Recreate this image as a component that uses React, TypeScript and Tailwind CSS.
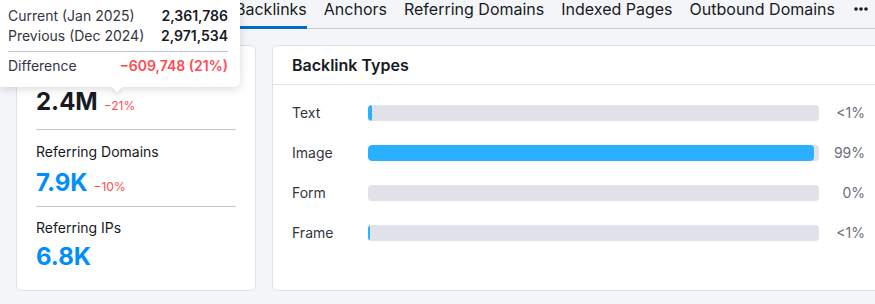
import React from "react";

const tabs = ["Backlinks", "Anchors", "Referring Domains", "Indexed Pages", "Outbound Domains"];

const types = [
  { label: "Text", fill: 4, pct: "<1%" },
  { label: "Image", fill: 446, pct: "99%" },
  { label: "Form", fill: 0, pct: "0%" },
  { label: "Frame", fill: 2, pct: "<1%" },
];

function Tooltip() {
  return (
    <div className="absolute left-0 top-0 z-10 w-[240px] h-[87px] bg-white rounded-br-md shadow-[0_2px_10px_rgba(0,0,0,0.15)] px-2 pt-[6px] text-sm leading-5">
      <div className="flex justify-between">
        <span className="text-[#333642]">Current (Jan 2025)</span>
        <span className="font-semibold text-[#171a22] pr-1">2,361,786</span>
      </div>
      <div className="flex justify-between">
        <span className="text-[#333642]">Previous (Dec 2024)</span>
        <span className="font-semibold text-[#171a22] pr-1">2,971,534</span>
      </div>
      <div className="mt-[5px] mr-1 h-px bg-[#c4c7cf]" />
      <div className="mt-1 flex justify-between">
        <span className="text-[#333642]">Difference</span>
        <span className="font-semibold text-[#ff4953] pr-1">−609,748 (21%)</span>
      </div>
      <div className="absolute left-[113px] bottom-[-4px] w-2 h-2 rotate-45 bg-white shadow-[2px_2px_3px_rgba(0,0,0,0.08)]" />
    </div>
  );
}

export default function App() {
  return (
    <div
      className="relative w-[875px] h-[304px] overflow-hidden bg-[#f4f5f9] text-[#171a22]"
      style={{ fontFamily: "Inter, 'Noto Sans', sans-serif" }}
    >
      <Tooltip />

      <div className="flex items-start h-[29px] border-b border-[#c8cad3] pl-[235px] gap-[17px] text-base leading-[18px] whitespace-nowrap">
        {tabs.map((t, i) => (
          <div
            key={t}
            className={i === 0 ? "h-[29px] -mb-px border-b-[3px] border-[#006dca]" : "h-[28px]"}
          >
            {t}
          </div>
        ))}
        <svg width="16" height="18" viewBox="0 0 16 18" className="ml-[2px]">
          <circle cx="2" cy="9" r="1.8" fill="#171a22" />
          <circle cx="7" cy="9" r="1.8" fill="#171a22" />
          <circle cx="12" cy="9" r="1.8" fill="#171a22" />
        </svg>
      </div>

      <div className="flex gap-4 pl-4 pt-4">
        {/* summary card */}
        <div className="w-[240px] h-[246px] shrink-0 bg-white rounded-md border border-[#e0e1e9] px-[19px] pt-[15px]">
          <div className="text-sm leading-5">Backlinks</div>
          <div className="mt-[5px] flex items-baseline gap-[6px] h-8">
            <span className="text-2xl font-bold leading-8">2.4M</span>
            <span className="text-xs text-[#ff4953]">−21%</span>
          </div>
          <div className="mt-[11px] h-px bg-[#c4c7cf]" />
          <div className="mt-3 text-sm leading-5">Referring Domains</div>
          <div className="mt-[5px] flex items-baseline gap-[6px] h-8">
            <span className="text-2xl font-bold leading-8 text-[#008ff8]">7.9K</span>
            <span className="text-xs text-[#ff4953]">−10%</span>
          </div>
          <div className="mt-[7px] h-px bg-[#c4c7cf]" />
          <div className="mt-[11px] text-sm leading-5">Referring IPs</div>
          <div className="mt-[3px] flex items-baseline h-8">
            <span className="text-2xl font-bold leading-8 text-[#008ff8]">6.8K</span>
          </div>
        </div>

        {/* backlink types card */}
        <div className="w-[620px] h-[246px] shrink-0 bg-white rounded-md border border-[#e0e1e9]">
          <div className="h-[39px] border-b border-[#e0e1e9] px-[19px] flex items-center">
            <span className="text-base font-semibold">Backlink Types</span>
          </div>
          <div className="pt-2 pl-[19px]">
            {types.map((r) => (
              <div key={r.label} className="h-10 flex items-center text-sm">
                <div className="w-[76px] text-[#333642]">{r.label}</div>
                <div className="w-[451px] h-4 rounded-sm bg-[#e0e1e9] overflow-hidden">
                  <div className="h-4 rounded-sm bg-[#2bb0ff]" style={{ width: r.fill }} />
                </div>
                <div className="w-[46px] text-right text-[#6c6e79]">{r.pct}</div>
              </div>
            ))}
          </div>
        </div>
      </div>
    </div>
  );
}
